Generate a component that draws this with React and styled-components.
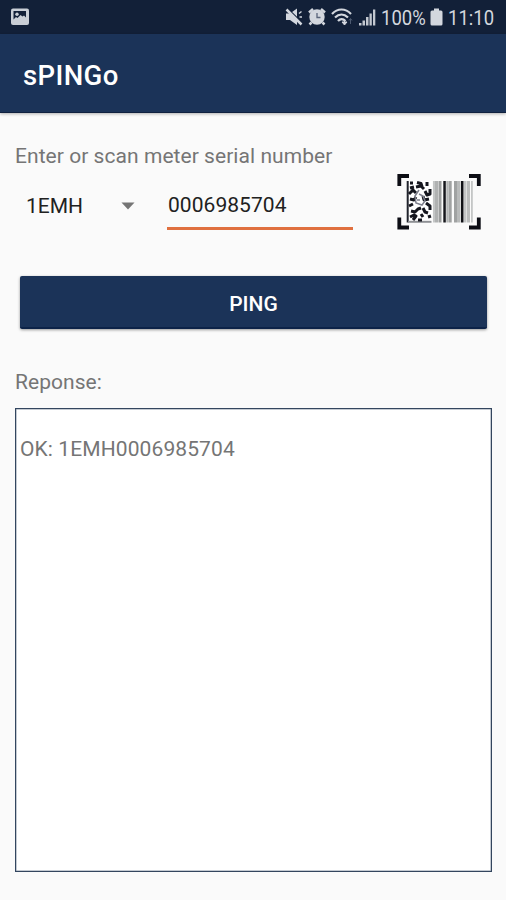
import React, { useState } from "react"
import styled, { createGlobalStyle } from "styled-components"

const GlobalStyle = createGlobalStyle`
  * {
    box-sizing: border-box;
  }

  body {
    margin: 0;
    background-color: #fafafa;
    font-family: Roboto, "Liberation Sans", sans-serif;
  }
`

const Screen = styled.div`
  display: flex;
  flex-direction: column;
  width: 506px;
  height: 900px;
  background-color: #fafafa;
`

const StatusBar = styled.div`
  display: flex;
  align-items: center;
  justify-content: space-between;
  height: 34px;
  padding: 0 11px 0 10px;
  background-color: #122038;
  color: #d3d7de;
`

const StatusIcons = styled.div`
  display: flex;
  align-items: center;
  gap: 5px;
`

const StatusText = styled.span`
  width: ${(props) => props.$width}px;
  padding-top: 1px;
  font-size: 21px;
  line-height: 34px;
  white-space: nowrap;
  transform: scaleX(0.88);
  transform-origin: left;
`

const AppBar = styled.header`
  display: flex;
  align-items: center;
  height: 79px;
  padding: 5px 23px 0;
  background-color: #1b3358;
  border-bottom: 1px solid #10213f;
  box-shadow: 0 1px 3px rgba(0, 0, 0, 0.3);
`

const AppTitle = styled.h1`
  margin: 0;
  color: #fff;
  font-size: 27.5px;
  font-weight: 500;
  line-height: 32px;
  letter-spacing: 0.4px;
`

const Content = styled.main`
  display: flex;
  flex: 1;
  flex-direction: column;
  padding: 30px 14px 28px 15px;
`

const Label = styled.label`
  color: #757575;
  font-size: 21px;
  line-height: 26px;
  letter-spacing: 0.05px;
`

const SerialRow = styled.div`
  display: flex;
  height: 62px;
`

const Spinner = styled.button`
  display: flex;
  align-items: center;
  justify-content: space-between;
  width: 120px;
  height: 32px;
  margin: 21px 32px 0 0;
  padding: 0 0 0 11px;
  border: none;
  background: none;
  color: #212121;
  font: inherit;
  font-size: 21px;
`

const SerialInput = styled.input`
  width: 186px;
  height: 41px;
  margin-top: 20px;
  padding: 0 0 6px 1px;
  border: none;
  border-bottom: 3px solid #e0703f;
  background: none;
  color: #212121;
  font: inherit;
  font-size: 21px;
  letter-spacing: 0.05px;
  outline: none;
`

const ScanButton = styled.button`
  height: 56px;
  margin: 5px 0 0 44px;
  padding: 0;
  border: none;
  background: none;
`

const PingButton = styled.button`
  height: 53px;
  margin: 45px 5px 40px;
  padding: 4px 0 0;
  border: none;
  border-bottom: 2px solid #0d2348;
  border-radius: 2px;
  background-color: #1b3358;
  box-shadow: 0 1px 3px rgba(0, 0, 0, 0.4);
  color: #fff;
  font: inherit;
  font-size: 21px;
  font-weight: 500;
`

const ResponseBox = styled.div`
  flex: 1;
  margin-top: 13px;
  padding: 27px 4px;
  border: 1px solid #33465f;
  box-shadow: inset 0 0 0 0.5px #8a95a5;
  background-color: #fff;
  color: #757575;
  font-size: 21px;
  line-height: 26px;
  letter-spacing: 0.1px;
`

const PictureIcon = () => (
  <svg width="20" height="18" viewBox="0 0 20 18">
    <rect x="1" y="0.5" width="18" height="16.5" rx="2" fill="#c9ced6" />
    <path
      d="M3.5 3H16v6.5l-2-2-1.5 1-2-1.500-3 3-1.5-1-2.500 2.500z"
      fill="#122038"
    />
    <circle cx="7" cy="6.300" r="1.700" fill="#c9ced6" />
  </svg>
)

const MuteIcon = () => (
  <svg width="18" height="18" viewBox="0 0 18 18">
    <path d="M1 5.5h4l7-5v16.500l-7-5H1z" fill="#d3d7de" />
    <path d="M3 1l15 14.500" stroke="#122038" strokeWidth="1.5" />
    <path d="M1.5 1.500l15 15" stroke="#d3d7de" strokeWidth="2.500" />
    <path d="M14 5.5l2.500-2M14.5 9h2.500" stroke="#d3d7de" strokeWidth="1.5" />
  </svg>
)

const AlarmIcon = () => (
  <svg width="18" height="18" viewBox="0 0 18 18">
    <circle cx="9" cy="9" r="7.7" fill="#d3d7de" />
    <path
      d="M1 4.5L5 1M17 4.5L13 1M3.5 14.5l-2 2M14.5 14.5l2 2"
      stroke="#d3d7de"
      strokeWidth="2.5"
    />
    <path d="M9 5V9.5h3.500" fill="none" stroke="#59647a" strokeWidth="1.3" />
  </svg>
)

const WifiIcon = () => (
  <svg width="23" height="18" viewBox="0 0 23 18">
    <path
      d="M1 6C6.5 0 14.5 0 20 6M4 9.5c4-4 9-4 13 0M7 13c2.300-2.500 5-2.500 7.500 0"
      fill="none"
      stroke="#d3d7de"
      strokeWidth="2.2"
    />
    <path d="M13.5 11.5v5M11 14l2.500 3 2.500-3z" fill="#d3d7de" stroke="#d3d7de" />
    <path d="M19.500 16v-5M18 12.5l1.5-2 1.5 2" fill="none" stroke="#4d5a70" />
  </svg>
)

const SignalIcon = () => (
  <svg width="17" height="18" viewBox="0 0 17 18">
    <path
      d="M0 15h2.500v2.500H0zM3.500 12.500h2.500v5H3.500zM7 9h2.500v8.500H7zM10.500 5.500h2.300v12h-2.300zM14 1.500h2.300v16H14z"
      fill="#c3c8d0"
    />
  </svg>
)

const BatteryIcon = () => (
  <svg width="13" height="18" viewBox="0 0 13 18">
    <path
      d="M4 0.5h5V2.5h2q1.5 0 1.5 1.5V16q0 1.5-1.5 1.5H2Q0.5 17.5 0.5 16V4q0-1.5 1.5-1.5h2z"
      fill="#d3d7de"
    />
  </svg>
)

// x, width and colour of every bar of the barcode
const bars = [
  [36, 2, "#c4c6c6"],
  [38, 3, "#b0b2b2"],
  [41.5, 3, "#9c9e9e"],
  [46.3, 2.5, "#16171c"],
  [49.3, 2.5, "#b4b6b6"],
  [52, 2.7, "#a0a2a2"],
  [57, 3, "#a0a2a2"],
  [60, 3.5, "#b8baba"],
  [64, 2.5, "#101116"],
  [67, 2.5, "#c4c6c6"],
  [70, 3, "#babcbc"],
  [74, 1.8, "#c4c6c6"],
]

const ScanIcon = () => (
  <svg width="84" height="56" viewBox="0 0 84 56">
    <path
      d="M2.3 12V2H12M72 2h9.8v10M81.8 43.5v10H72M12 53.500H2.3v-10"
      fill="none"
      stroke="#0c0d14"
      strokeWidth="3.8"
    />
    <rect x="10" y="7" width="25" height="41.5" fill="#fff" />
    <path d="M10.7 7v41.5" stroke="#20232c" strokeWidth="2" />
    <path d="M11 47.8h23.500" stroke="#8e9094" strokeWidth="2" />
    {/* square code on the left half */}
    <path
      d="M13 9h3M20 8.500l4 1 1 3M30 8v4M13 14l4-1M19 13l5-1 3 3M12 20l4-4 3 3M28 17l2 4 3-1V15M13 25l4 1 2-3M32 25l-5 1-1-4M12 32l4-2M29 29l4 3v4M14 37l4 1 3-3 3-1M26 34l2 4 3 1M13 43l4-2 2 1-3 4M24 40l2 3M31 43l3-1M21 46h4"
      fill="none"
      stroke="#15161e"
      strokeWidth="3"
      strokeLinejoin="round"
    />
    <path
      d="M22 16l-4 6 1 7 6 2 3-4-2-5-4-2M20 26h3"
      fill="none"
      stroke="#7d7f8c"
      strokeWidth="1.5"
    />
    {bars.map(([x, width, fill]) => (
      <rect key={x} x={x} y="7" width={width} height="41.5" fill={fill} />
    ))}
  </svg>
)

const App = () => {
  const [serial, setSerial] = useState("0006985704")

  return (
    <Screen>
      <GlobalStyle />
      <StatusBar>
        <PictureIcon />
        <StatusIcons>
          <MuteIcon />
          <AlarmIcon />
          <WifiIcon />
          <SignalIcon />
          <StatusText $width={44}>100%</StatusText>
          <BatteryIcon />
          <StatusText $width={47}>11:10</StatusText>
        </StatusIcons>
      </StatusBar>
      <AppBar>
        <AppTitle>sPINGo</AppTitle>
      </AppBar>
      <Content>
        <Label htmlFor="serial">Enter or scan meter serial number</Label>
        <SerialRow>
          <Spinner>
            1EMH
            <svg width="14" height="8" viewBox="0 0 14 8">
              <path d="M0.5 0.5h13L7 7.5z" fill="#757575" />
            </svg>
          </Spinner>
          <SerialInput
            id="serial"
            value={serial}
            onChange={(e) => setSerial(e.target.value)}
          />
          <ScanButton aria-label="Scan">
            <ScanIcon />
          </ScanButton>
        </SerialRow>
        <PingButton>PING</PingButton>
        <Label as="div">Reponse:</Label>
        <ResponseBox>OK: 1EMH0006985704</ResponseBox>
      </Content>
    </Screen>
  )
}

export default App
